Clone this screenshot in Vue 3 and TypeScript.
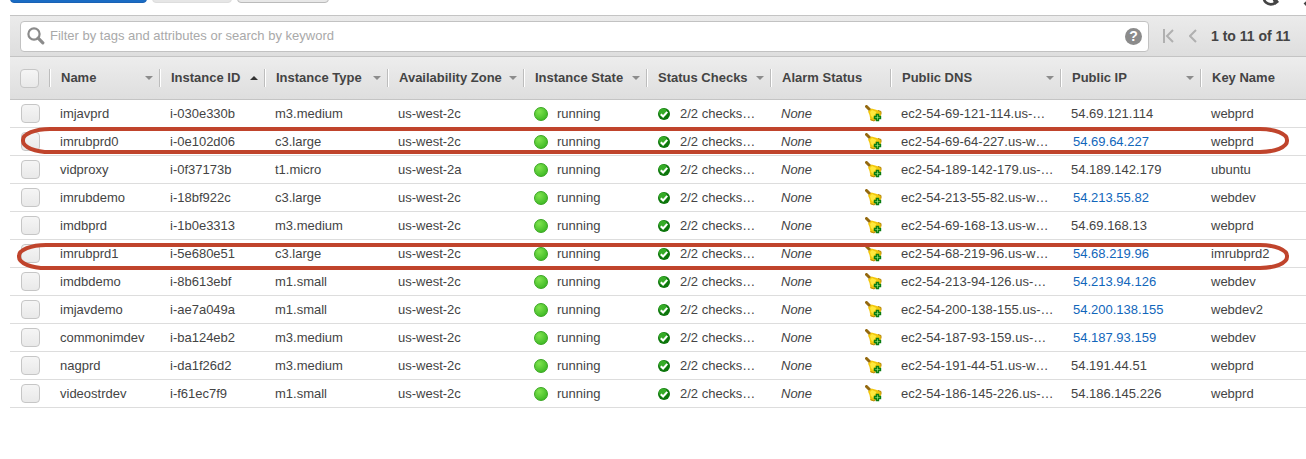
<script setup lang="ts">
interface Column {
  label: string
  sort: 'none' | 'idle' | 'asc'
  kind: string
}

interface Instance {
  name: string
  id: string
  type: string
  zone: string
  dns: string
  ip: string
  elastic: boolean
  key: string
}

const columns: Column[] = [
  { label: 'Name', sort: 'idle', kind: 'name' },
  { label: 'Instance ID', sort: 'asc', kind: 'id' },
  { label: 'Instance Type', sort: 'idle', kind: 'type' },
  { label: 'Availability Zone', sort: 'idle', kind: 'zone' },
  { label: 'Instance State', sort: 'idle', kind: 'state' },
  { label: 'Status Checks', sort: 'idle', kind: 'checks' },
  { label: 'Alarm Status', sort: 'none', kind: 'alarm' },
  { label: 'Public DNS', sort: 'idle', kind: 'dns' },
  { label: 'Public IP', sort: 'idle', kind: 'ip' },
  { label: 'Key Name', sort: 'none', kind: 'key' },
]

const instances: Instance[] = [
  { name: 'imjavprd', id: 'i-030e330b', type: 'm3.medium', zone: 'us-west-2c', dns: 'ec2-54-69-121-114.us-…', ip: '54.69.121.114', elastic: false, key: 'webprd' },
  { name: 'imrubprd0', id: 'i-0e102d06', type: 'c3.large', zone: 'us-west-2c', dns: 'ec2-54-69-64-227.us-w…', ip: '54.69.64.227', elastic: true, key: 'webprd' },
  { name: 'vidproxy', id: 'i-0f37173b', type: 't1.micro', zone: 'us-west-2a', dns: 'ec2-54-189-142-179.us-…', ip: '54.189.142.179', elastic: false, key: 'ubuntu' },
  { name: 'imrubdemo', id: 'i-18bf922c', type: 'c3.large', zone: 'us-west-2c', dns: 'ec2-54-213-55-82.us-w…', ip: '54.213.55.82', elastic: true, key: 'webdev' },
  { name: 'imdbprd', id: 'i-1b0e3313', type: 'm3.medium', zone: 'us-west-2c', dns: 'ec2-54-69-168-13.us-w…', ip: '54.69.168.13', elastic: false, key: 'webprd' },
  { name: 'imrubprd1', id: 'i-5e680e51', type: 'c3.large', zone: 'us-west-2c', dns: 'ec2-54-68-219-96.us-w…', ip: '54.68.219.96', elastic: true, key: 'imrubprd2' },
  { name: 'imdbdemo', id: 'i-8b613ebf', type: 'm1.small', zone: 'us-west-2c', dns: 'ec2-54-213-94-126.us-…', ip: '54.213.94.126', elastic: true, key: 'webdev' },
  { name: 'imjavdemo', id: 'i-ae7a049a', type: 'm1.small', zone: 'us-west-2c', dns: 'ec2-54-200-138-155.us-…', ip: '54.200.138.155', elastic: true, key: 'webdev2' },
  { name: 'commonimdev', id: 'i-ba124eb2', type: 'm3.medium', zone: 'us-west-2c', dns: 'ec2-54-187-93-159.us-…', ip: '54.187.93.159', elastic: true, key: 'webdev' },
  { name: 'nagprd', id: 'i-da1f26d2', type: 'm3.medium', zone: 'us-west-2c', dns: 'ec2-54-191-44-51.us-w…', ip: '54.191.44.51', elastic: false, key: 'webprd' },
  { name: 'videostrdev', id: 'i-f61ec7f9', type: 'm1.small', zone: 'us-west-2c', dns: 'ec2-54-186-145-226.us-…', ip: '54.186.145.226', elastic: false, key: 'webprd' },
]
</script>

<template>
  <main class="console">
    <div class="actions">
      <button class="action launch" type="button" aria-label="Launch Instance"></button>
      <button class="action connect" type="button" aria-label="Connect" disabled></button>
      <button class="action more" type="button" aria-label="Actions"></button>
      <span class="spacer"></span>
      <button class="tool" type="button" aria-label="Refresh">
        <svg width="20" height="20" viewBox="0 0 20 20">
          <path d="M14.500 4.500A7 7 0 1 0 15.500 15.500" fill="none" stroke="#444" stroke-width="2.600" />
          <path d="M12.500 12.500l5 .5 1.500 2-4 3z" fill="#444" />
        </svg>
      </button>
      <button class="tool" type="button" aria-label="Settings">
        <svg width="20" height="20" viewBox="0 0 20 20">
          <circle cx="10" cy="10" r="5" fill="none" stroke="#444" stroke-width="4" />
          <path d="M10 0v4M10 16v4M0 10h4M16 10h4M2 2l4 4M14 14l4 4M2 18l4-4M14 6l4-4" stroke="#444" stroke-width="4" />
        </svg>
      </button>
    </div>

    <div class="panel">
      <div class="filterbar">
        <div class="search">
          <svg class="glass" width="18" height="18" viewBox="0 0 18 18">
            <circle cx="7" cy="7" r="5.600" fill="none" stroke="#8b8b8b" stroke-width="2.200" />
            <path d="M11.200 11.200l4.600 4.600" stroke="#8b8b8b" stroke-width="3.200" stroke-linecap="round" />
          </svg>
          <input type="text" aria-label="Filter instances" placeholder="Filter by tags and attributes or search by keyword" />
          <button class="help" type="button" aria-label="Help">?</button>
        </div>
        <nav class="pager">
          <button type="button" aria-label="First page">
            <svg width="12" height="14" viewBox="0 0 12 14">
              <path d="M1 0v14M10 1L4 7l6 6" fill="none" stroke="#b0b0b0" stroke-width="2" />
            </svg>
          </button>
          <button type="button" aria-label="Previous page">
            <svg width="8" height="14" viewBox="0 0 8 14">
              <path d="M7 1L1 7l6 6" fill="none" stroke="#b0b0b0" stroke-width="2" />
            </svg>
          </button>
          <span class="range">1 to 11 of 11</span>
        </nav>
      </div>

      <div class="grid">
        <table>
          <colgroup>
            <col class="col-pick" />
            <col v-for="c in columns" :key="c.kind" :class="'col-' + c.kind" />
          </colgroup>
          <thead>
            <tr>
              <th class="pick"><input type="checkbox" aria-label="Select all instances" /></th>
              <th v-for="c in columns" :key="c.kind" scope="col">
                <div class="head">
                  <span>{{ c.label }}</span>
                  <svg v-if="c.sort !== 'none'" width="8" height="5" viewBox="0 0 8 5">
                    <path v-if="c.sort === 'asc'" d="M0 4L4 0l4 4z" fill="#333" />
                    <path v-else d="M0 0h8L4 4z" fill="#8c8c8c" />
                  </svg>
                </div>
              </th>
            </tr>
          </thead>
          <tbody>
            <tr v-for="row in instances" :key="row.id">
              <td class="pick"><input type="checkbox" :aria-label="'Select ' + row.name" /></td>
              <td>{{ row.name }}</td>
              <td>{{ row.id }}</td>
              <td>{{ row.type }}</td>
              <td>{{ row.zone }}</td>
              <td>
                <div class="status state"><span class="dot"></span>running</div>
              </td>
              <td>
                <div class="status checks">
                  <svg width="12" height="12" viewBox="0 0 12 12">
                    <circle cx="6" cy="6" r="6" fill="#0d760c" />
                    <circle cx="5" cy="4.500" r="4" fill="#35ab27" />
                    <path d="M2.800 6.200l2.300 2.300 4.200-4.600" fill="none" stroke="#fff" stroke-width="2" />
                  </svg>
                  2/2 checks…
                </div>
              </td>
              <td>
                <div class="alarm">
                  <em>None</em>
                  <button type="button" aria-label="Create alarm">
                    <svg width="17" height="17" viewBox="0 0 17 17">
                      <path d="M1.500 1.500l4 4" stroke="#94690f" stroke-width="3" stroke-linecap="round" />
                      <path d="M3 6.500L6.500 3.500 12 5l4 1.500v4L9 16l-3.500-.5L4.500 10z" fill="#f3c70c" />
                      <path d="M5 7l2-2 4.500 2L8 13l-2-2z" fill="#ffe83d" />
                      <path d="M5.500 14.500L9 16l2-1.500M13 5.500l3 1v3" fill="none" stroke="#b5860a" />
                      <path d="M11.500 9.500h2v2h2v2h-2v2h-2v-2h-2v-2h2z" fill="#b6f58e" stroke="#0a7d12" stroke-width="1.400" />
                    </svg>
                  </button>
                </div>
              </td>
              <td>{{ row.dns }}</td>
              <td>
                <a v-if="row.elastic" href="#">{{ row.ip }}</a>
                <template v-else>{{ row.ip }}</template>
              </td>
              <td>{{ row.key }}</td>
            </tr>
          </tbody>
        </table>
        <svg class="ring first" aria-hidden="true"><rect x="2" y="2" rx="27" ry="11" /></svg>
        <svg class="ring second" aria-hidden="true"><rect x="2" y="2" rx="27" ry="11" /></svg>
      </div>
    </div>
  </main>
</template>

<style>
body {
  background: #fff;
}
</style>

<style scoped>
.console {
  font-family: "Liberation Sans", Arial, sans-serif;
  font-size: 13px;
  line-height: 16px;
  color: #444;
  padding-left: 10px;
  overflow: hidden;
}
button {
  font: inherit;
  padding: 0;
  border: 0;
  background: none;
  flex: none;
}
.actions {
  display: flex;
  align-items: flex-end;
  gap: 5px;
  height: 3px;
  margin-bottom: 12px;
}
.action {
  box-sizing: border-box;
  height: 30px;
  border: 1px solid #bbb;
  border-radius: 4px;
  background: #e8e8e8;
}
.launch {
  width: 137px;
  background: #1a6cc4;
  border-color: #1a62b5;
}
.connect {
  width: 80px;
  background: #e6e6e6;
  border-color: #ddd;
}
.more {
  width: 92px;
}
.spacer {
  flex: 1;
}
.tool {
  height: 20px;
  margin-bottom: -4px;
  margin-right: 18px;
}
.tool + .tool {
  margin-right: -17px;
}
.filterbar {
  display: flex;
  align-items: center;
  box-sizing: border-box;
  height: 42px;
  padding: 0 12px 0 10px;
  border-top: 1px solid #c4c4c4;
  border-bottom: 1px solid #c4c4c4;
  background: linear-gradient(#ebebeb, #dedede);
}
.search {
  display: flex;
  align-items: center;
  flex: 1;
  box-sizing: border-box;
  height: 31px;
  padding: 0 6px;
  border: 1px solid #c2c2c2;
  border-radius: 4px;
  background: #fff;
}
.glass {
  flex: none;
}
.search input {
  flex: 1;
  min-width: 0;
  margin: 0;
  padding: 0 0 0 5px;
  border: 0;
  outline: 0;
  background: none;
  color: #444;
  font: inherit;
}
.search input::placeholder {
  color: #a9a9a9;
  opacity: 1;
}
.help {
  width: 17px;
  height: 17px;
  border-radius: 50%;
  background: #8b8b8b;
  color: #fff;
  font-size: 14px;
  font-weight: bold;
  line-height: 17px;
}
.pager {
  display: flex;
  align-items: center;
  gap: 14px;
  padding-left: 14px;
}
.pager button,
.pager svg,
.tool svg,
.alarm svg {
  display: block;
}
.range {
  min-width: 83px;
  font-size: 14px;
  font-weight: bold;
  white-space: nowrap;
}
.grid {
  position: relative;
}
table {
  width: 100%;
  table-layout: fixed;
  border-collapse: separate;
  border-spacing: 0;
}
.col-pick { width: 39px; }
.col-name { width: 110px; }
.col-id { width: 105px; }
.col-type { width: 123px; }
.col-zone { width: 136px; }
.col-state { width: 123px; }
.col-checks { width: 124px; }
.col-alarm { width: 120px; }
.col-dns { width: 170px; }
.col-ip { width: 140px; }
th {
  height: 42px;
  padding: 0;
  border-bottom: 1px solid #c4c4c4;
  background: linear-gradient(#ededed, #dedede);
  text-align: left;
}
.head {
  display: flex;
  align-items: center;
  justify-content: space-between;
  height: 18px;
  padding: 0 6px 0 11px;
  border-left: 1px solid #bdbdbd;
  box-shadow: inset 1px 0 #fff;
  white-space: nowrap;
}
td {
  height: 27px;
  padding: 0 0 0 11px;
  border-bottom: 1px solid #ddd;
  white-space: nowrap;
}
.pick,
td.pick {
  padding: 0 0 0 10px;
}
.pick input {
  appearance: none;
  display: block;
  box-sizing: border-box;
  width: 19px;
  height: 19px;
  margin: 0;
  border: 1px solid #c6c6c6;
  border-radius: 4px;
  background: linear-gradient(#f5f5f5, #e9e9e9);
}
td.pick input {
  margin-left: 1px;
}
.status {
  display: flex;
  align-items: center;
}
.state {
  gap: 9px;
}
.checks {
  gap: 10px;
  padding-left: 1px;
}
.dot {
  box-sizing: border-box;
  width: 14px;
  height: 14px;
  border: 1px solid #38a51f;
  border-radius: 50%;
  background: radial-gradient(circle at 35% 30%, #7fe44e, #2fae1b);
}
.alarm {
  display: flex;
  align-items: center;
  justify-content: space-between;
  padding-right: 8px;
}
a {
  margin-left: 2px;
  color: #1166bb;
  text-decoration: none;
}
.ring {
  position: absolute;
  left: 11px;
  width: calc(100% - 28px);
  height: 27px;
  pointer-events: none;
  overflow: visible;
}
.ring rect {
  width: calc(100% - 4px);
  height: 23px;
  fill: none;
  stroke: #c0442c;
  stroke-width: 4px;
}
.first {
  top: 70px;
}
.second {
  top: 186px;
  left: 7px;
  width: calc(100% - 24px);
}
</style>
